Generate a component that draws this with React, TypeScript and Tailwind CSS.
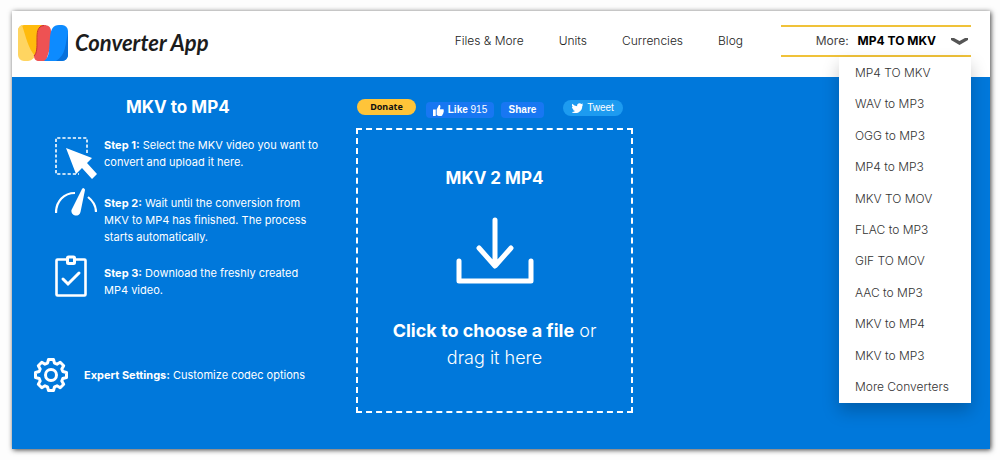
import type { ReactNode } from 'react'

const NAV_LINKS = ['Files & More', 'Units', 'Currencies', 'Blog']

const CONVERTERS = [
    'MP4 TO MKV',
    'WAV to MP3',
    'OGG to MP3',
    'MP4 to MP3',
    'MKV TO MOV',
    'FLAC to MP3',
    'GIF TO MOV',
    'AAC to MP3',
    'MKV to MP4',
    'MKV to MP3',
    'More Converters',
]

function Logo() {
    return (
        <a href="#" className="flex items-center gap-[7px]">
            <svg width="50" height="36" viewBox="0 0 50 36" aria-hidden="true">
                <path d="M6 0H26V20L17 32L6 30L0 8V6A6 6 0 0 1 6 0Z" fill="#ffbb0d" />
                <path d="M4 0C8 12 10 23 17 31C15 35 12 36 9 36H6A6 6 0 0 1 0 30V6A6 6 0 0 1 4 0Z" fill="#ffd561" />
                <path d="M26 0C30 0 33 2 33 6V20L28 36H21C18 36 16 34 16 31C21 26 18 15 20 6C21 2 23 0 26 0Z" fill="#ee5253" />
                <path d="M26 0.500C19 1 19 8 19 15C19 23 19 28 16 31" fill="none" stroke="#c9302f" />
                <path d="M26 36C32 32 31 24 32 12C33 4 35 0 41 0H44A6 6 0 0 1 50 6V30A6 6 0 0 1 44 36Z" fill="#0d8bff" />
                <path d="M50 8C47 20 48 30 38 36H44A6 6 0 0 0 50 30Z" fill="#0871db" />
            </svg>
            <span className="font-['Lato','Liberation_Sans',sans-serif] text-[22px] leading-8 font-bold text-[#1c1c1c] italic">
                Converter App
            </span>
        </a>
    )
}

function SelectIcon() {
    return (
        <svg width="42" height="42" viewBox="0 0 42 42" aria-hidden="true">
            <path d="M32 16V1H1V37H24" fill="none" stroke="#fff" strokeWidth="1.6" strokeDasharray="3.2 2" />
            <path d="M11 11L37 21L32 26L42 37L37 42L27 31L21 37Z" fill="#fff" />
        </svg>
    )
}

function GaugeIcon() {
    return (
        <svg width="42" height="28" viewBox="0 0 42 28" aria-hidden="true">
            <path d="M1 25C1 13 9 5 20 5M33 9C38 13 41 18 41 24" fill="none" stroke="#fff" strokeWidth="2.2" />
            <path d="M28 0C29 0 30 1 30 2L25.500 24A4.500 4.500 0 0 1 16.500 22L27 1Z" fill="#fff" />
        </svg>
    )
}

function ClipboardIcon() {
    return (
        <svg width="42" height="42" viewBox="0 0 42 42" fill="none" stroke="#fff" aria-hidden="true">
            <rect x="1.500" y="4.500" width="29" height="36" rx="1" strokeWidth="2.600" />
            <rect x="12.500" y="2" width="7" height="6.500" rx="1" fill="#0078db" strokeWidth="3" />
            <path d="M8 24L13 29L24 18" strokeWidth="3" strokeLinecap="round" />
        </svg>
    )
}

function GearIcon() {
    return (
        <svg width="34" height="34" viewBox="0 0 34 34" fill="none" stroke="#fff" strokeWidth="3" strokeLinejoin="round" aria-hidden="true">
            <circle cx="17" cy="17" r="5.500" />
            <path d="M14.500 1.500H19.500L20.500 5.200L23 6.200L26.200 4.300L29.700 7.800L27.800 11L28.800 13.500L32.500 14.500V19.500L28.800 20.500L27.800 23L29.700 26.200L26.200 29.700L23 27.800L20.500 28.800L19.500 32.500H14.500L13.500 28.800L11 27.800L7.800 29.700L4.300 26.200L6.200 23L5.200 20.500L1.500 19.500V14.500L5.200 13.500L6.200 11L4.300 7.800L7.800 4.300L11 6.200L13.500 5.200Z" />
        </svg>
    )
}

function UploadIcon() {
    return (
        <svg width="78" height="67" viewBox="0 0 78 67" fill="none" stroke="#fff" strokeWidth="5" strokeLinecap="round" strokeLinejoin="round" aria-hidden="true">
            <path d="M39 3V48M23 31L39 49L55 31" />
            <path d="M3 44V64H75V44" />
        </svg>
    )
}

function Step({ icon, children, className = '' }: { icon: ReactNode; children: ReactNode; className?: string }) {
    return (
        <li className="flex items-start gap-[7px]">
            <span className="w-[42px] shrink-0">{icon}</span>
            <p className={className}>{children}</p>
        </li>
    )
}

function MoreMenu() {
    return (
        <div className="relative w-[190px]">
            <button
                type="button"
                aria-expanded="true"
                aria-controls="more-converters"
                className="flex h-8 w-full items-center justify-end border-y-2 border-[#f0c239] pr-[3px] text-xs text-[#444]">
                More:
                <strong className="ml-[9px] font-bold text-black">MP4 TO MKV</strong>
                <svg className="ml-[15px]" width="17" height="9" viewBox="0 0 17 9" aria-hidden="true">
                    <path d="M0 1L3 1L8.500 4L14 1H17V3L8.500 8L0 3Z" fill="#555" />
                </svg>
            </button>
            <ul
                id="more-converters"
                className="absolute top-full right-0 z-10 grid h-[346px] w-[132px] auto-rows-fr bg-white shadow-[0_8px_16px_rgba(0,0,0,0.22)]">
                {CONVERTERS.map((name) => (
                    <li key={name} className="flex">
                        <a href="#" className="flex w-full items-center pl-4 text-xs font-light text-[#333]">
                            {name}
                        </a>
                    </li>
                ))}
            </ul>
        </div>
    )
}

export default function App() {
    return (
        <div className="bg-[#fdfdfd] pt-[11px] pr-[10px] pb-[11px] pl-3 font-['Inter','Liberation_Sans',sans-serif]">
            <div className="shadow-[1px_1px_5px_rgba(0,0,0,0.75)]">
                <header className="flex items-start bg-white pt-[14px] pr-[19px] pb-5 pl-[6px]">
                    <div className="flex h-8 items-center pt-1">
                        <Logo />
                    </div>
                    <nav className="ml-auto flex h-8 items-center gap-[35px] text-xs font-light text-[#222]">
                        {NAV_LINKS.map((link) => (
                            <a key={link} href="#">
                                {link}
                            </a>
                        ))}
                    </nav>
                    <div className="ml-[38px]">
                        <MoreMenu />
                    </div>
                </header>
                <main className="grid min-h-[372px] grid-cols-[344fr_277fr_357fr] bg-[#0078db] text-white">
                    <section className="pt-[18px]">
                        <h1 className="pl-[114px] text-[17px] leading-6 font-bold">MKV to MP4</h1>
                        <ol className="mt-[18px] flex flex-col gap-[9px] pl-[43px] text-[11px] leading-[17px]">
                            <Step icon={<SelectIcon />}>
                                <strong>Step 1:</strong> Select the MKV video you want to
                                <br />
                                convert and upload it here.
                            </Step>
                            <Step icon={<GaugeIcon />} className="pt-[7px]">
                                <strong>Step 2:</strong> Wait until the conversion from
                                <br />
                                MKV to MP4 has finished. The process
                                <br />
                                starts automatically.
                            </Step>
                            <Step icon={<ClipboardIcon />} className="pt-[10px]">
                                <strong>Step 3:</strong> Download the freshly created
                                <br />
                                MP4 video.
                            </Step>
                        </ol>
                        <button type="button" className="mt-[59px] ml-[22px] flex items-center gap-4 text-[11px]">
                            <GearIcon />
                            <span>
                                <strong>Expert Settings:</strong> Customize codec options
                            </span>
                        </button>
                    </section>
                    <section className="pt-[22px]">
                        <div className="flex h-5 items-start font-['Liberation_Sans',sans-serif] text-[10px] leading-4 font-bold whitespace-nowrap">
                            <button type="button" className="ml-px h-4 w-[59px] rounded-full bg-[#ffc439] font-['Noto_Sans',sans-serif] text-[9px] text-[#111]">
                                Donate
                            </button>
                            <button type="button" className="mt-[3px] ml-[10px] flex h-4 w-[68px] items-center justify-center gap-1 rounded-sm bg-[#1877f2]">
                                <svg width="11" height="11" viewBox="0 0 12 12" fill="#fff" aria-hidden="true">
                                    <path d="M0 5H3V12H0ZM4 5L6.500 0H7.500C8.500 1 8 3 7.500 4.500H11C12 4.500 12 6 11.500 6.500C12 7 12 8 11 8.500C11.500 9 11 10 10.500 10.200C10.700 11 10 12 9 12H6L4 11Z" />
                                </svg>
                                <span>
                                    Like <span className="font-normal">915</span>
                                </span>
                            </button>
                            <button type="button" className="mt-[3px] ml-[7px] h-4 w-[43px] rounded-sm bg-[#1877f2]">
                                Share
                            </button>
                            <button type="button" className="mt-px ml-[19px] flex h-4 w-[60px] items-center justify-center gap-1 rounded-full bg-[#1d9bf0] font-normal">
                                <svg width="11" height="10" viewBox="1 3 22 18" fill="#fff" aria-hidden="true">
                                    <path d="M23.600 4.900a10 10 0 0 1-2.800.8 4.900 4.900 0 0 0 2.100-2.700 9.900 9.900 0 0 1-3.100 1.200 4.900 4.900 0 0 0-8.400 4.500A13.900 13.900 0 0 1 1.600 3.600a4.900 4.900 0 0 0 1.500 6.600 4.900 4.900 0 0 1-2.200-.6 4.900 4.900 0 0 0 3.900 4.900 4.900 4.900 0 0 1-2.200.1 4.900 4.900 0 0 0 4.600 3.400A9.900 9.900 0 0 1 0 20a13.900 13.900 0 0 0 21.500-12.400 9.900 9.900 0 0 0 2.100-2.700Z" />
                                </svg>
                                Tweet
                            </button>
                        </div>
                        <button
                            type="button"
                            className="mt-[9px] flex w-full flex-col items-center border-2 border-dashed border-white pt-[36px] pb-[40px]">
                            <span className="text-[17px] leading-6 font-bold">MKV 2 MP4</span>
                            <span className="mt-[27px]">
                                <UploadIcon />
                            </span>
                            <span className="mt-[33px] text-lg leading-[27px] font-light">
                                <strong className="font-bold">Click to choose a file</strong> or
                                <br />
                                drag it here
                            </span>
                        </button>
                    </section>
                </main>
            </div>
        </div>
    )
}
